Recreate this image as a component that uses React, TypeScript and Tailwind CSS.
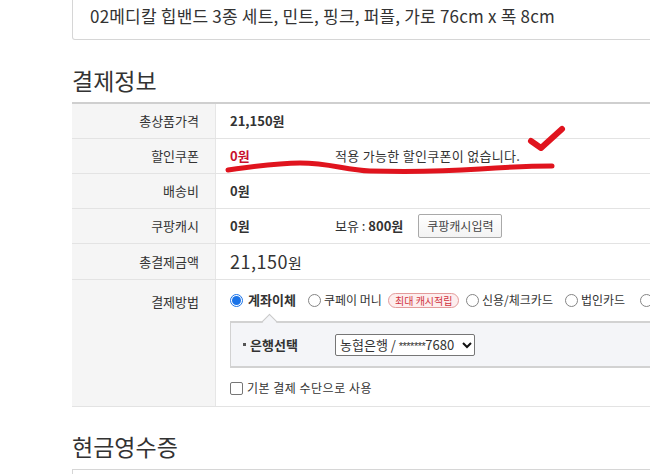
import React from 'react';

const FONT = { fontFamily: '"Noto Sans CJK KR", "Noto Sans", sans-serif' };

const Radio: React.FC<{ checked?: boolean }> = ({ checked }) =>
  checked ? (
    <span className="inline-flex size-[13px] shrink-0 items-center justify-center rounded-full border border-[#1a73e8] bg-white">
      <span className="size-[9px] rounded-full bg-[#1a73e8]" />
    </span>
  ) : (
    <span className="inline-block size-[13px] shrink-0 rounded-full border border-[#858585] bg-white" />
  );

const Row: React.FC<{ label: string; h: string; children: React.ReactNode; top?: boolean }> = ({ label, h, children, top }) => (
  <div className={`flex border-b border-[#e3e3e3] ${h}`}>
    <div
      className={`w-[144px] shrink-0 bg-[#f5f5f5] border-r border-[#e6e6e6] pr-[16px] text-right text-[13px] text-[#333] flex justify-end ${
        top ? 'items-start pt-[12px]' : 'items-center'
      }`}
    >
      {label}
    </div>
    <div className={`flex-1 pl-[14px] flex ${top ? 'flex-col pt-[11px]' : 'items-center'}`}>{children}</div>
  </div>
);

export default function App() {
  return (
    <div className="relative w-[650px] h-[474px] overflow-hidden bg-white text-[#333]" style={FONT}>
      <div className="ml-[72px] w-[640px]">
        {/* product name box */}
        <div className="h-[40px] border border-t-0 border-[#d6d6d6] rounded-bl-[3px] pl-[17px] pt-[5px] text-[17px] leading-[22px] text-[#333] tracking-[0.2px] whitespace-nowrap">
          02메디칼 힙밴드 3종 세트, 민트, 핑크, 퍼플, 가로 76cm x 폭 8cm
        </div>

        <h2 className="mt-[28px] text-[23px] leading-[24px] font-normal text-[#333]">결제정보</h2>

        <div className="mt-[10px] border-t-2 border-[#cfcfcf]">
          <Row label="총상품가격" h="h-[35px]">
            <span className="text-[13px] font-bold">21,150원</span>
          </Row>
          <Row label="할인쿠폰" h="h-[35px]">
            <span className="w-[105px] text-[13px] font-bold text-[#c8102e]">0원</span>
            <span className="text-[13px] tracking-[0.3px]">적용 가능한 할인쿠폰이 없습니다.</span>
          </Row>
          <Row label="배송비" h="h-[35px]">
            <span className="text-[13px] font-bold">0원</span>
          </Row>
          <Row label="쿠팡캐시" h="h-[35px]">
            <span className="w-[105px] text-[13px] font-bold">0원</span>
            <span className="text-[13px]">
              보유 : <b>800원</b>
            </span>
            <button className="ml-[15px] h-[24px] w-[84px] rounded-[2px] border border-[#a9a9a9] bg-gradient-to-b from-white to-[#f3f3f3] text-[12px] text-[#444]">
              쿠팡캐시입력
            </button>
          </Row>
          <Row label="총결제금액" h="h-[36px]">
            <span className="text-[18px] tracking-[0.5px]">21,150<span className="text-[15px]">원</span></span>
          </Row>
          <Row label="결제방법" h="h-[127px]" top>
            <div className="flex items-center text-[12px] leading-[18px] whitespace-nowrap">
              <Radio checked />
              <span className="ml-[5px] w-[60px] font-bold text-[13px]">계좌이체</span>
              <Radio />
              <span className="ml-[3px] w-[64px]">쿠페이 머니</span>
              <span className="w-[78px]">
                <span className="inline-block rounded-full border border-[#e39b9b] bg-[#fdeeee] px-[6px] text-[10px] leading-[13px] text-[#d0343f]">
                  최대 캐시적립
                </span>
              </span>
              <Radio />
              <span className="ml-[3px] w-[83px]">신용/체크카드</span>
              <Radio />
              <span className="ml-[3px] w-[59px]">법인카드</span>
              <Radio />
            </div>

            <div className="relative mt-[12px] h-[47px] border border-t-2 border-b-2 border-[#d2d2d2] bg-[#f4f5f8] flex items-center pl-[12px]">
              <span className="absolute -top-[7px] left-[33px] size-[11px] rotate-45 border-l border-t border-[#c8c8c8] bg-[#f4f5f8]" />
              <span className="w-[92px] text-[13px] font-bold flex items-center gap-[4px]">
                <span className="size-[3px] bg-[#555]" />
                은행선택
              </span>
              <div className="flex h-[22px] w-[140px] items-center justify-between rounded-[2px] border border-[#767676] bg-white pl-[4px] pr-[2px] text-[13px] whitespace-nowrap">
                <span>
                  농협은행 / <span className="text-[11px] tracking-[-0.5px]" style={{ fontFamily: '"Liberation Sans", sans-serif' }}>*******</span>7680
                </span>
                <svg width="10" height="8" viewBox="0 0 10 8" className="shrink-0">
                  <path d="M1 2 L5 6 L9 2" stroke="#111" strokeWidth="2" fill="none" />
                </svg>
              </div>
            </div>

            <div className="mt-[11px] flex items-center gap-[4px] text-[12px] text-[#333] tracking-[0.5px]">
              <span className="size-[13px] rounded-[2px] border border-[#767676] bg-white" />
              기본 결제 수단으로 사용
            </div>
          </Row>
        </div>

        <h2 className="mt-[27px] text-[23px] leading-[24px] font-normal text-[#333]">현금영수증</h2>
        <div className="mt-[11px] h-[20px] border border-[#d6d6d6]" />
      </div>

      {/* hand-drawn marks */}
      <svg className="pointer-events-none absolute inset-0" width="650" height="474">
        <path
          d="M228 170 C 250 167, 275 163, 300 163 C 330 163, 345 170, 370 171 C 410 172, 450 171, 480 169 C 510 167, 535 166, 552 166"
          stroke="#e0141e"
          strokeWidth="5"
          strokeLinecap="round"
          fill="none"
        />
        <path
          d="M531 141 L541 148 L562 129"
          stroke="#e0141e"
          strokeWidth="6"
          strokeLinecap="round"
          strokeLinejoin="round"
          fill="none"
        />
      </svg>
    </div>
  );
}
